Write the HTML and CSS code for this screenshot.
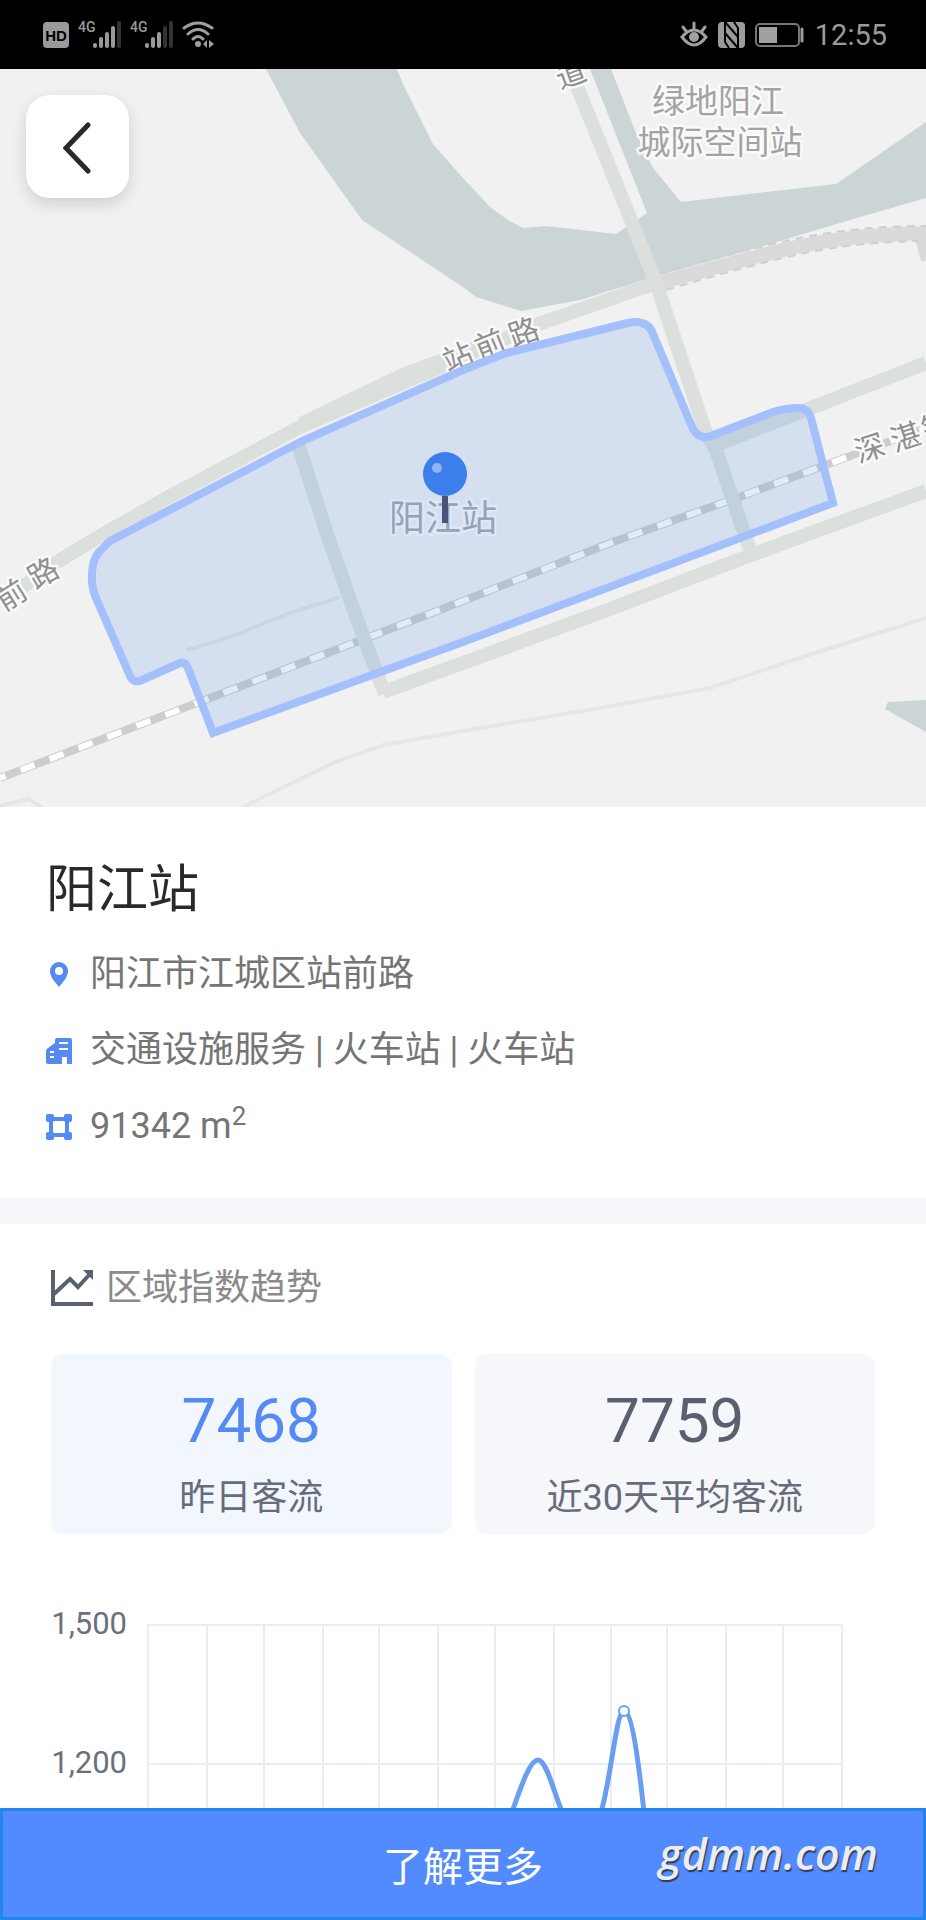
FILE: index.html
```html
<!DOCTYPE html>
<html lang="zh-CN">
<head>
<meta charset="utf-8">
<meta name="viewport" content="width=device-width, initial-scale=1">
<title>阳江站</title>
<link rel="stylesheet" href="styles.css">
</head>
<body>
<div class="app">
  <header class="status">
    <div class="status-group status-left">
      <svg width="26" height="26" viewBox="0 0 26 26"><rect width="26" height="26" rx="4" fill="#9a9a9a"/><text class="hd" x="13" y="19" text-anchor="middle">HD</text></svg>
      <svg width="43" height="27" viewBox="0 0 43 27"><text class="net" x="0" y="11">4G</text><g fill="#9a9a9a"><rect x="15" y="22" width="4" height="5" rx="2"/><rect x="21" y="16" width="4" height="11" rx="2"/><rect x="27" y="11" width="4" height="16" rx="2"/><rect x="33" y="5" width="4" height="22" rx="2"/></g><rect x="39" y="0" width="4" height="27" rx="2" fill="#333"/></svg>
      <svg width="43" height="27" viewBox="0 0 43 27"><text class="net" x="0" y="11">4G</text><g fill="#9a9a9a"><rect x="15" y="22" width="4" height="5" rx="2"/><rect x="21" y="16" width="4" height="11" rx="2"/><rect x="27" y="11" width="4" height="16" rx="2"/></g><g fill="#333"><rect x="33" y="5" width="4" height="22" rx="2"/><rect x="39" y="0" width="4" height="27" rx="2"/></g></svg>
      <svg width="32" height="27" viewBox="0 0 32 27"><g fill="none" stroke="#a0a0a0" stroke-width="3" stroke-linecap="round"><path d="M2 7Q16-3 30 7M6 13Q16 4 26 13M11 18Q16 13 21 18"/></g><circle cx="16" cy="23" r="3" fill="#a0a0a0"/><path d="M21 23l4-4v8zM27 19l5 4-5 4z" fill="#a0a0a0"/></svg>
    </div>
    <div class="status-group status-right">
      <svg width="28" height="27" viewBox="0 0 28 27"><g fill="none" stroke="#a0a0a0" stroke-width="3" stroke-linecap="round"><path d="M2 16Q14 2 26 16Q14 32 2 16ZM14 2v5M3 6l3 4M25 6l-3 4"/></g><circle cx="14" cy="16" r="5" fill="#a0a0a0"/></svg>
      <svg width="27" height="28" viewBox="0 0 27 28"><rect y="1" width="27" height="26" rx="4" fill="#9a9a9a"/><path d="M7 1v20l4 6M7 1l13 15M20 27V7l-4-6M20 27L7 12" stroke="#000" stroke-width="2" fill="none"/></svg>
      <svg width="50" height="24" viewBox="0 0 50 24"><rect x="1" y="1" width="43" height="22" rx="4" fill="none" stroke="#777" stroke-width="2"/><rect x="4" y="4" width="18" height="16" fill="#a0a0a0"/><path d="M47 6v12" stroke="#9a9a9a" stroke-width="3" stroke-linecap="round"/></svg>
      <time class="clock">12:55</time>
    </div>
  </header>

  <main class="content">
    <section class="map">
      <svg class="map-canvas" viewBox="0 69 926 738" role="img" aria-label="地图">
        <rect y="69" width="926" height="738" fill="#f1f1f1"/>
        <g fill="#ccd5d6">
          <path d="M266 69L300 133L362 220L463 287L476 297L521 311L580 300L660 275L760 247L850 220L926 198V122L836 184L681 202L653 168L636 133L611 69H590L647 213L616 234L546 226L523 228L508 220L490 207L463 178L433 144L403 84L397 69Z"/>
          <path d="M888 702L926 700V732L885 709Z"/>
        </g>
        <g fill="none" stroke="#e2e8e5" stroke-width="4">
          <path d="M243 807L333 763L383 745L463 731L600 708L710 688L815 653L926 618M0 806L28 799L42 807"/>
          <path d="M187 650L230 637L290 613L340 597" stroke="#e4e6e6"/>
        </g>
        <path d="M656 284Q740 260 800 246Q860 234 926 233M922 238L928 260" fill="none" stroke="#dadada" stroke-width="14"/>
        <path d="M660 274Q738 251 800 238Q860 226 926 226M666 290Q746 266 804 253Q860 242 918 241" fill="none" stroke="#cfcfcf" stroke-width="2" stroke-dasharray="8 6"/>
        <path d="M0 778L197 703L463 601L613 542L742 496L850 456L926 428" fill="none" stroke="#cdcdcd" stroke-width="8"/>
        <path d="M0 778L197 703L463 601L613 542L742 496L850 456L926 428" fill="none" stroke="#fff" stroke-width="6" stroke-dasharray="15 16" stroke-dashoffset="9"/>
        <g fill="none" stroke="#dbe0dc" stroke-width="14">
          <path d="M0 603L57 562L100 536L167 498L300 427L365 399L440 367L536 325L656 283"/>
          <path d="M300 421L400 373L440 358L500 335" stroke-width="8"/>
          <path d="M716 445L803 411L926 363"/>
          <path d="M383 692L463 663L610 609L751 555L863 514L926 491"/>
          <path d="M297 441L328 537L358 622L385 694"/>
          <path d="M570 69L631 220L656 283L706 433L716 450L751 553"/>
        </g>
        <g class="halo road">
          <text transform="translate(457 355) rotate(-22)">站</text><text transform="translate(489 342) rotate(-22)">前</text><text transform="translate(523 330) rotate(-20)">路</text>
          <text transform="translate(10 593) rotate(-32)">前</text><text transform="translate(42 571) rotate(-30)">路</text>
          <text transform="translate(570 72) rotate(-20)">道</text>
          <text transform="translate(869 446) rotate(-18)">深</text><text transform="translate(905 435) rotate(-18)">湛</text><text transform="translate(936 424) rotate(-18)">铁</text>
        </g>
        <g class="halo place"><text x="718" y="99">绿地阳江</text><text x="720" y="140">城际空间站</text></g>
        <text class="halo station" x="443" y="515">阳江站</text>
        <path d="M158 516L110 541L99 552Q92 560 92 575Q91 586 96 598L130 676Q133 683 140 681L180 663Q185 661 188 668L213 733L463 642L833 503L811 418Q808 408 798 408Q787 408 773 412L708 437Q698 438 693 429L653 334Q650 325 642 323Q636 321 628 323L506 353L463 370L302 441Z" fill="rgba(85,146,235,.18)" stroke="#a3bffc" stroke-width="8"/>
        <path d="M442 496h6v27h-6z" fill="#4c5378"/>
        <circle cx="445" cy="474" r="22" fill="#3b7eec"/><circle cx="437" cy="468" r="5" fill="#8fb4f7"/>
      </svg>
      <button class="back" type="button" aria-label="返回"><svg width="30" height="54" viewBox="0 0 30 54"><path d="M25 5L3 28L25 51" fill="none" stroke="#2a2a2a" stroke-width="5" stroke-linecap="round"/></svg></button>
    </section>

    <section class="info">
      <h1 class="title">阳江站</h1>
      <ul class="facts">
        <li class="fact"><svg class="fact-icon" viewBox="0 0 26 28"><path d="M13 2a9 9 0 0 0-9 9c0 6 5 11 9 16 4-5 9-10 9-16a9 9 0 0 0-9-9z" fill="#558af3"/><circle cx="13" cy="11" r="4" fill="#fff"/></svg><span>阳江市江城区站前路</span></li>
        <li class="fact"><svg class="fact-icon" viewBox="0 0 26 28"><path d="M9 4q0-2 2-2h13q2 0 2 2v24h-5v-7h-5v7H2q-2 0-2-2V15q0-2 2-3l7-5z" fill="#558af3"/><path d="M13 7h9M13 13h9M4 16h4M4 21h4" stroke="#fff" stroke-width="2"/></svg><span>交通设施服务 | 火车站 | 火车站</span></li>
        <li class="fact"><svg class="fact-icon" viewBox="0 0 26 28"><path d="M5 7h16v16H5z" fill="none" stroke="#558af3" stroke-width="4"/><g fill="#558af3"><rect y="2" width="8" height="8" rx="2"/><rect x="18" y="2" width="8" height="8" rx="2"/><rect y="20" width="8" height="8" rx="2"/><rect x="18" y="20" width="8" height="8" rx="2"/></g></svg><span>91342 m<sup>2</sup></span></li>
      </ul>
    </section>

    <section class="trend">
      <h2 class="heading"><svg width="42" height="36" viewBox="0 0 42 36"><path d="M2 0v34h40" fill="none" stroke="#5a6070" stroke-width="4"/><path d="M3 24L19 9l8 8L38 5" fill="none" stroke="#5a6070" stroke-width="4"/><path d="M32 0h10v10z" fill="#5a6070"/></svg>区域指数趋势</h2>
      <div class="cards">
        <div class="card card-active"><strong class="number">7468</strong><span class="label">昨日客流</span></div>
        <div class="card"><strong class="number">7759</strong><span class="label">近30天平均客流</span></div>
      </div>
    </section>
    <svg class="chart" viewBox="0 0 926 208" role="img" aria-label="区域指数趋势图">
      <path d="M147 25H843M147 164H843M148 25V208M207 25V208M264 25V208M323 25V208M379 25V208M438 25V208M495 25V208M554 25V208M611 25V208M667 25V208M726 25V208M783 25V208M842 25V208" fill="none" stroke="#e9ecf1" stroke-width="2"/>
      <text class="tick" x="127" y="34">1,500</text><text class="tick" x="127" y="173">1,200</text>
      <g fill="none" stroke="#6a9eee" stroke-width="5"><path d="M512 212C522 184 530 160 538 160C546 160 552 186 562 212M601 212C611 180 616 111 624 111C632 111 639 166 644 212"/></g>
      <circle cx="624" cy="111" r="5" fill="#fff" stroke="#6a9eee" stroke-width="2"/>
    </svg>
  </main>

  <footer class="footer"><button class="more" type="button">了解更多</button><span class="mark">gdmm.com</span></footer>
</div>
</body>
</html>
```
FILE: styles.css
```css
* { box-sizing: border-box; }
body { margin: 0; background: #fff; font-family: Roboto, "Noto Sans CJK SC", sans-serif; }
.app { display: flex; flex-direction: column; height: 100vh; }

.status { display: flex; flex: none; justify-content: space-between; align-items: center; height: 69px; padding: 0 39px 0 43px; background: #000; }
.status-group { display: flex; align-items: center; }
.status-left { gap: 9px; }
.status-right { gap: 10px; }
.hd { font: bold 15px "Liberation Sans", sans-serif; fill: #000; }
.net { font: 500 14px Roboto, sans-serif; fill: #9a9a9a; }
.clock { font-size: 29px; line-height: 36px; color: #9a9a9a; }

.content { flex: 1; min-height: 0; overflow: hidden auto; scrollbar-width: none; }

.map { position: relative; }
.map-canvas { display: block; width: 100%; height: auto; }
.map-canvas text { text-anchor: middle; dominant-baseline: central; font-family: "Noto Sans CJK SC", sans-serif; }
.halo { stroke: #fafafa; stroke-width: 5px; stroke-linejoin: round; paint-order: stroke; }
.road { font-size: 30px; fill: #8f8f8f; }
.place { font-size: 33px; fill: #a3a3a3; }
.station { font-size: 36px; fill: #a6a6ab; }
.back { position: absolute; top: 26px; left: 26px; display: flex; align-items: center; justify-content: center; width: 103px; height: 103px; padding: 0; border: 0; border-radius: 24px; background: #fff; box-shadow: 0 6px 16px rgba(0, 0, 0, .14); }

.info { padding: 47px 46px 34px; border-bottom: 26px solid #f4f6fa; }
.title { margin: 0 0 10px; font-size: 51px; line-height: 72px; font-weight: 400; color: #2a2a2a; }
.facts { margin: 0; padding: 0; list-style: none; }
.fact { display: flex; align-items: center; gap: 18px; font-size: 36px; line-height: 76px; color: #757575; }
.fact-icon { flex: none; width: 26px; height: 28px; }
.fact sup { font-size: 26px; line-height: 0; }

.trend { padding: 40px 51px 66px; }
.heading { display: flex; align-items: center; gap: 13px; margin: 0 0 42px; font-size: 36px; line-height: 48px; font-weight: 400; color: #8a8a8a; }
.cards { display: grid; grid-template-columns: 1fr 1fr; gap: 23px; }
.card { display: flex; flex-direction: column; align-items: center; gap: 18px; padding: 32px 0 12px; border-radius: 12px; background: #f5f7fb; color: #5a6070; }
.card-active { background: #f2f7fe; }
.number { font-size: 62px; line-height: 70px; font-weight: 400; }
.card-active .number { color: #558af3; }
.label { font-size: 36px; line-height: 48px; color: #666c7a; }

.chart { display: block; width: 100%; height: auto; }
.tick { font-size: 31px; fill: #6b707c; text-anchor: end; }

.footer { position: relative; flex: none; }
.more { display: block; width: 100%; height: 112px; border: 3px solid #2086ea; background: #528aff; color: #fff; font-family: "Noto Sans CJK SC", sans-serif; font-size: 40px; }
.mark { position: absolute; right: 48px; top: 16px; font: italic 600 43px/60px "Open Sans", sans-serif; color: #ebedf3; text-shadow: 1px 2px 1px #333a50; }
```
